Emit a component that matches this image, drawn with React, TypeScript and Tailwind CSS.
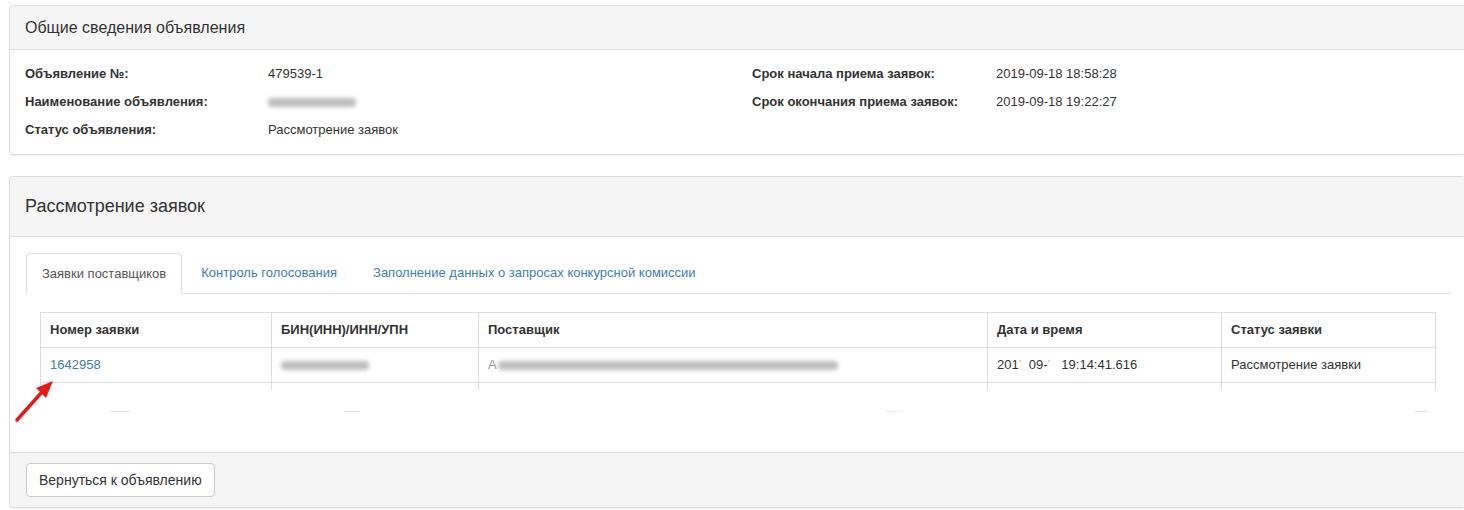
import React from "react";

const Blur = ({ w, className = "" }: { w: number; className?: string }) => (
  <span
    className={"inline-block h-[9px] align-middle bg-[#bdbdbd] blur-[2px] rounded-sm " + className}
    style={{ width: w }}
  />
);

export default function App() {
  return (
    <div className="relative w-[1464px] h-[510px] overflow-hidden bg-white text-[#333] text-[13px]" style={{ fontFamily: '"Liberation Sans", Arial, sans-serif' }}>
      <div className="pl-[9px] pt-[5px] w-[1473px]">
        {/* Panel 1 */}
        <div className="w-[1457px] border border-[#ddd] rounded-[4px] shadow-[0_1px_1px_rgba(0,0,0,0.05)]">
          <div className="h-[44px] bg-[#f5f5f5] border-b border-[#ddd] flex items-center px-[15px] text-[16px] text-[#333] rounded-t-[4px]">
            Общие сведения объявления
          </div>
          <div className="px-[15px] pt-[10px] pb-[10px] flex">
            <div className="w-[727px]">
              <div className="flex h-[28px] items-center">
                <div className="w-[243px] font-bold">Объявление №:</div>
                <div>479539-1</div>
              </div>
              <div className="flex h-[28px] items-center">
                <div className="w-[243px] font-bold">Наименование объявления:</div>
                <div><Blur w={88} /></div>
              </div>
              <div className="flex h-[28px] items-center">
                <div className="w-[243px] font-bold">Статус объявления:</div>
                <div>Рассмотрение заявок</div>
              </div>
            </div>
            <div>
              <div className="flex h-[28px] items-center">
                <div className="w-[244px] font-bold">Срок начала приема заявок:</div>
                <div>2019-09-18 18:58:28</div>
              </div>
              <div className="flex h-[28px] items-center">
                <div className="w-[244px] font-bold">Срок окончания приема заявок:</div>
                <div>2019-09-18 19:22:27</div>
              </div>
            </div>
          </div>
        </div>

        {/* Panel 2 */}
        <div className="mt-[21px] w-[1457px] border border-[#ddd] rounded-[4px] shadow-[0_1px_1px_rgba(0,0,0,0.05)]">
          <div className="h-[60px] bg-[#f5f5f5] border-b border-[#ddd] flex items-center px-[15px] text-[18px] text-[#333] rounded-t-[4px]">
            Рассмотрение заявок
          </div>
          <div className="relative pl-[16px] pr-[14px] pt-[16px] h-[215px]">
            <div className="flex border-b border-[#ddd] h-[41px]">
              <div className="h-[41px] -mb-px px-[15px] flex items-center border border-[#ddd] border-b-white bg-white rounded-t-[4px] text-[#555]">
                Заявки поставщиков
              </div>
              <div className="ml-[2px] h-[40px] px-[17px] flex items-center text-[#3f7cb3]">Контроль голосования</div>
              <div className="ml-[2px] h-[40px] px-[17px] flex items-center text-[#3f7cb3]">Заполнение данных о запросах конкурсной комиссии</div>
            </div>
            <div className="pl-[14px] pt-[18px]">
              <div className="relative w-[1396px] h-[80px] overflow-hidden">
                <table className="border-collapse table-fixed w-[1395px]">
                  <colgroup>
                    <col className="w-[231px]" />
                    <col className="w-[207px]" />
                    <col className="w-[509px]" />
                    <col className="w-[234px]" />
                    <col className="w-[214px]" />
                  </colgroup>
                  <thead>
                    <tr className="h-[35px]">
                      <th className="border border-[#ddd] text-left font-bold px-[9px]">Номер заявки</th>
                      <th className="border border-[#ddd] text-left font-bold px-[9px]">БИН(ИНН)/ИНН/УПН</th>
                      <th className="border border-[#ddd] text-left font-bold px-[9px]">Поставщик</th>
                      <th className="border border-[#ddd] text-left font-bold px-[9px]">Дата и время</th>
                      <th className="border border-[#ddd] text-left font-bold px-[9px]">Статус заявки</th>
                    </tr>
                  </thead>
                  <tbody>
                    <tr className="h-[35px]">
                      <td className="border border-[#ddd] px-[9px] text-[#3f7cb3]">1642958</td>
                      <td className="border border-[#ddd] px-[9px]"><Blur w={88} /></td>
                      <td className="border border-[#ddd] px-[9px]">
                        <span className="text-[#999]">А</span>
                        <Blur w={340} className="ml-[1px]" />
                      </td>
                      <td className="border border-[#ddd] px-[9px]">201<span className="text-[#bbb]">’</span>&nbsp;&nbsp;09-<span className="text-[#bbb]">’</span>&nbsp;&nbsp;&nbsp;19:14:41.616</td>
                      <td className="border border-[#ddd] px-[9px]">Рассмотрение заявки</td>
                    </tr>
                    <tr className="h-[35px]">
                      <td className="border-l border-r border-[#ddd]"></td>
                      <td className="border-l border-r border-[#ddd]"></td>
                      <td className="border-l border-r border-[#ddd]"></td>
                      <td className="border-l border-r border-[#ddd]"></td>
                      <td className="border-l border-r border-[#ddd]"></td>
                    </tr>
                  </tbody>
                </table>
                <div className="absolute left-0 right-0 top-[78px] h-[2px] bg-white" />
              </div>
            </div>
            {/* faint erasure remnants */}
            <div className="absolute top-[174px] left-[100px] w-[20px] h-px bg-[#e4e4e4]" />
            <div className="absolute top-[174px] left-[335px] w-[14px] h-px bg-[#e4e4e4]" />
            <div className="absolute top-[174px] left-[875px] w-[18px] h-px bg-[#ececec]" />
            <div className="absolute top-[174px] left-[1405px] w-[12px] h-px bg-[#e0e0e0]" />
          </div>
          <div className="h-[55px] bg-[#f5f5f5] border-t border-[#ddd] flex items-center px-[16px] rounded-b-[4px]">
            <button className="h-[34px] px-[12px] bg-white border border-[#ccc] rounded-[4px] text-[14px] text-[#333]">
              Вернуться к объявлению
            </button>
          </div>
        </div>
      </div>

      {/* red arrow annotation */}
      <svg className="absolute left-0 top-0" width="80" height="440" viewBox="0 0 80 440">
        <line x1="17" y1="420" x2="42" y2="392" stroke="#e01b1b" strokeWidth="3.5" strokeLinecap="round" />
        <polygon points="53,381 36,388 46,398" fill="#e01b1b" />
      </svg>
    </div>
  );
}
